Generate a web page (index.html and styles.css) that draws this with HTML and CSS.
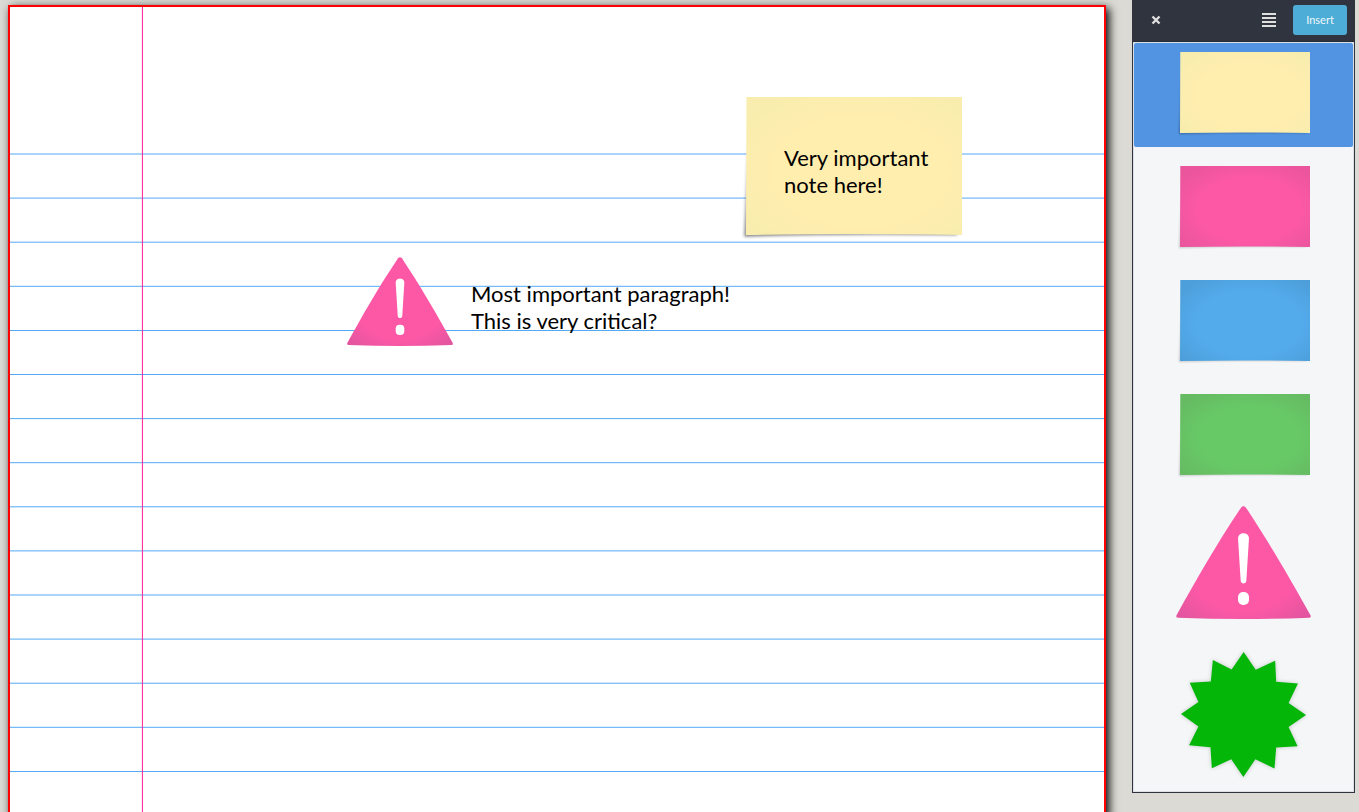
FILE: index.html
```html
<!DOCTYPE html>
<html lang="en">
<head>
<meta charset="utf-8">
<title>Notebook</title>
<link rel="stylesheet" href="styles.css">
</head>
<body>
<svg class="defs" aria-hidden="true">
  <defs>
    <radialGradient id="yellow" cx=".53" cy=".54" r=".66"><stop offset=".6" stop-color="#ffeeae"/><stop offset="1" stop-color="#f8edae"/></radialGradient>
    <radialGradient id="pink" cx=".53" cy=".54" r=".66"><stop offset=".6" stop-color="#fc58a6"/><stop offset="1" stop-color="#ea559c"/></radialGradient>
    <radialGradient id="blue" cx=".53" cy=".54" r=".66"><stop offset=".6" stop-color="#54abec"/><stop offset="1" stop-color="#4c9fda"/></radialGradient>
    <radialGradient id="green" cx=".53" cy=".54" r=".66"><stop offset=".6" stop-color="#67c866"/><stop offset="1" stop-color="#66bb62"/></radialGradient>
    <radialGradient id="alert" cx=".5" cy=".5" r=".66"><stop offset=".65" stop-color="#fc58a6"/><stop offset="1" stop-color="#e3559f"/></radialGradient>
    <linearGradient id="fade" x1="0" y1="0" x2="0" y2="1"><stop offset="0" stop-color="#000" stop-opacity="0"/><stop offset="1" stop-color="#000" stop-opacity=".5"/></linearGradient>
    <filter id="soft" x="-10%" y="-10%" width="120%" height="120%"><feGaussianBlur stdDeviation="1"/></filter>
    <g id="note-shadow"><path d="M4 20 L2 82 Q60 80 130 81 L130 60 L20 20z" fill="url(#fade)" filter="url(#soft)"/></g>
    <path id="note-shape" d="M3.300 0H133V81Q60 79.800 3 81Z"/>
    <g id="alert-shape">
      <path fill="url(#alert)" d="M228 37Q235 28 243 37C310 138 380 258 437 361Q440 367 434 368C300 373 170 373 38 368Q31 367 34 361C90 258 160 138 228 37Z"/>
      <path fill="#fff" d="M219 130C219 109 252 109 252 130L244 257C243 268 228 268 227 257Z"/>
      <rect x="219" y="291" width="33" height="39" rx="15" fill="#fff"/>
    </g>
  </defs>
</svg>

<main class="paper">
  <svg class="rules" aria-hidden="true">
    <g class="rule">
      <line x2="100%" y1="147" y2="147"/><line x2="100%" y1="191.100" y2="191.100"/><line x2="100%" y1="235.200" y2="235.200"/>
      <line x2="100%" y1="279.300" y2="279.300"/><line x2="100%" y1="323.500" y2="323.500"/><line x2="100%" y1="367.500" y2="367.500"/>
      <line x2="100%" y1="411.600" y2="411.600"/><line x2="100%" y1="455.700" y2="455.700"/><line x2="100%" y1="499.800" y2="499.800"/>
      <line x2="100%" y1="543.900" y2="543.900"/><line x2="100%" y1="588" y2="588"/><line x2="100%" y1="632.100" y2="632.100"/>
      <line x2="100%" y1="676.200" y2="676.200"/><line x2="100%" y1="720.300" y2="720.300"/><line x2="100%" y1="764.500" y2="764.500"/>
    </g>
    <line class="margin" x1="132.400" x2="132.400" y2="100%"/>
  </svg>
  <svg class="sticky" viewBox="0 0 133 81" preserveAspectRatio="none" aria-hidden="true"><use href="#note-shadow"/><use href="#note-shape" fill="url(#yellow)"/></svg>
  <p class="text sticky-text">Very important<br>note here!</p>
  <svg class="warning" viewBox="33 32 405 340" aria-hidden="true"><use href="#alert-shape"/></svg>
  <p class="text warning-text">Most important paragraph!<br>This is very critical?</p>
</main>

<aside class="panel">
  <header class="toolbar">
    <button class="icon-button" aria-label="Close"><svg width="10" height="10" viewBox="0 0 10 10"><path d="M1.500 1.500L8.500 8.500M8.500 1.500L1.500 8.500" stroke="#dfdfdf" stroke-width="2.400"/></svg></button>
    <button class="icon-button menu" aria-label="Menu"><svg width="14" height="14" viewBox="0 0 14 14"><path d="M0 1H14M0 5H14M0 9H14M0 13H14" stroke="#dfdfdf" stroke-width="2"/></svg></button>
    <button class="insert">Insert</button>
  </header>
  <div class="shapes">
    <button class="shape selected" aria-label="Yellow note" aria-pressed="true"><svg class="note" viewBox="0 0 133 81"><use href="#note-shadow" opacity=".6"/><use href="#note-shape" fill="url(#yellow)"/></svg></button>
    <button class="shape" aria-label="Pink note"><svg class="note" viewBox="0 0 133 81"><use href="#note-shadow" opacity=".4"/><use href="#note-shape" fill="url(#pink)"/></svg></button>
    <button class="shape" aria-label="Blue note"><svg class="note" viewBox="0 0 133 81"><use href="#note-shadow" opacity=".4"/><use href="#note-shape" fill="url(#blue)"/></svg></button>
    <button class="shape" aria-label="Green note"><svg class="note" viewBox="0 0 133 81"><use href="#note-shadow" opacity=".4"/><use href="#note-shape" fill="url(#green)"/></svg></button>
    <button class="shape tight" aria-label="Warning"><svg class="alert" viewBox="33 32 405 340"><use href="#alert-shape"/></svg></button>
    <button class="shape" aria-label="Star"><svg class="star" viewBox="49 37 373 373"><path fill="#03b607" d="M236 37L272 90L330 63L333 126L398 131L370 189L422 225L370 261L397 318L333 322L328 385L271 357L235 410L199 357L141 384L137 321L73 315L101 259L49 222L101 186L75 129L138 125L144 61L200 89Z"/></svg></button>
  </div>
</aside>
</body>
</html>
```
FILE: styles.css
```css
* { box-sizing: border-box; }

body {
  display: flex;
  align-items: flex-start;
  height: 100vh;
  margin: 0;
  overflow: hidden;
  background: #dbdad4;
  font-family: Lato, "Liberation Sans", sans-serif;
}

button {
  padding: 0;
  border: 0;
  background: none;
  font: inherit;
}

svg { display: block; overflow: visible; }

.defs { position: absolute; width: 0; height: 0; }

.paper {
  position: relative;
  flex: 1;
  height: 100vh;
  margin: 5px 26px 0 8px;
  border: 2px solid #f00;
  background: #fff;
  box-shadow: 3px 3px 9px #000;
}

.rules { width: 100%; height: 100%; overflow: hidden; }
.rule { stroke: #54a9f5; }
.margin { stroke: #ff1f96; }

.sticky {
  position: absolute;
  top: 90px;
  left: 731px;
  width: 221px;
  height: 138px;
}

.warning {
  position: absolute;
  top: 250px;
  left: 337px;
  width: 106px;
  height: 89px;
}

.text {
  position: absolute;
  margin: 0;
  color: #000;
  font-size: 22px;
  line-height: 27px;
  white-space: nowrap;
}

.sticky-text { top: 137px; left: 774px; }
.warning-text { top: 273px; left: 461px; }

.panel {
  width: 223px;
  margin-right: 4px;
  border: 1px solid #2f343f;
  border-top: 0;
  background: #f4f6f8;
}

.toolbar {
  display: flex;
  align-items: center;
  height: 42px;
  padding: 0 7px 2px 9px;
  border-bottom: 1px solid #262a33;
  background: #2f343f;
}

.icon-button {
  display: grid;
  place-items: center;
  width: 28px;
  height: 30px;
}

.menu { margin-left: auto; }

.insert {
  width: 54px;
  height: 30px;
  margin-left: 10px;
  border-radius: 3px;
  background: #4dadd6;
  color: #f0f8fb;
  font-size: 11px;
}

.shapes {
  display: flex;
  flex-direction: column;
  gap: 10px;
  border: 1px solid #dce0e4;
}

.shape {
  display: flex;
  justify-content: center;
  padding: 9px 0 14px;
  border-radius: 2px;
}

.selected { background: #5294e2; }
.tight { padding-top: 7px; }

.note { width: 133px; height: 81px; }
.alert { width: 135px; height: 113px; }
.star { width: 125px; height: 125px; filter: drop-shadow(0 0 2px #0003); }
```
